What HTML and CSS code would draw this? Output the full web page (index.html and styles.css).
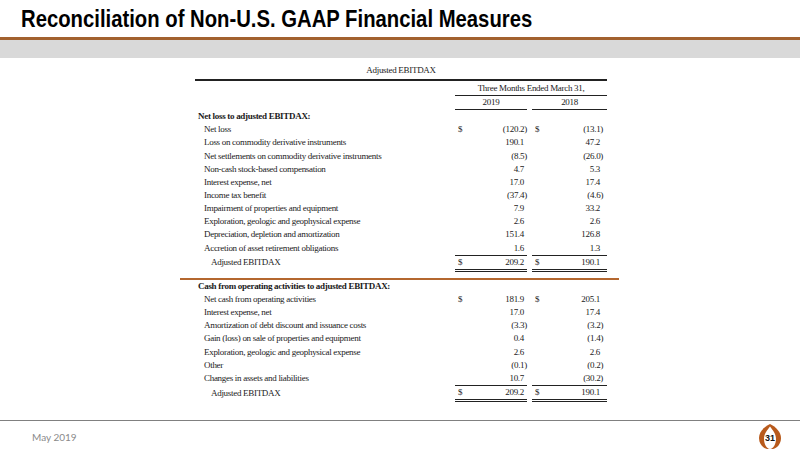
FILE: index.html
```html
<!DOCTYPE html>
<html lang="en">
<head>
  <meta charset="UTF-8">
  <meta name="viewport" content="width=device-width, initial-scale=1.0">
  <title>Reconciliation of Non-U.S. GAAP Financial Measures</title>
  <link rel="stylesheet" href="styles.css">
</head>
<body>
  <header class="slide-header">
    <h1>Reconciliation of Non-U.S. GAAP Financial Measures</h1>
  </header>
  <div class="band"></div>

  <main class="slide-body">
    <table class="recon">
      <colgroup>
        <col class="c-label">
        <col class="c-cur1">
        <col class="c-num1">
        <col class="c-gap">
        <col class="c-cur2">
        <col class="c-num2">
      </colgroup>
      <tr class="caption">
        <td colspan="6">Adjusted EBITDAX</td>
      </tr>
      <tr class="period">
        <td></td>
        <td colspan="5" class="rule">Three Months Ended March 31,</td>
      </tr>
      <tr class="years">
        <td></td>
        <td colspan="2" class="rule">2019</td>
        <td></td>
        <td colspan="2" class="rule">2018</td>
      </tr>

      <tr class="section"><td colspan="6">Net loss to adjusted EBITDAX:</td></tr>
      <tr><td class="item">Net loss</td><td class="cur">$</td><td class="num">(120.2)</td><td></td><td class="cur">$</td><td class="num">(13.1)</td></tr>
      <tr><td class="item">Loss on commodity derivative instruments</td><td></td><td class="num p">190.1</td><td></td><td></td><td class="num p">47.2</td></tr>
      <tr><td class="item">Net settlements on commodity derivative instruments</td><td></td><td class="num">(8.5)</td><td></td><td></td><td class="num">(26.0)</td></tr>
      <tr><td class="item">Non-cash stock-based compensation</td><td></td><td class="num p">4.7</td><td></td><td></td><td class="num p">5.3</td></tr>
      <tr><td class="item">Interest expense, net</td><td></td><td class="num p">17.0</td><td></td><td></td><td class="num p">17.4</td></tr>
      <tr><td class="item">Income tax benefit</td><td></td><td class="num">(37.4)</td><td></td><td></td><td class="num">(4.6)</td></tr>
      <tr><td class="item">Impairment of properties and equipment</td><td></td><td class="num p">7.9</td><td></td><td></td><td class="num p">33.2</td></tr>
      <tr><td class="item">Exploration, geologic and geophysical expense</td><td></td><td class="num p">2.6</td><td></td><td></td><td class="num p">2.6</td></tr>
      <tr><td class="item">Depreciation, depletion and amortization</td><td></td><td class="num p">151.4</td><td></td><td></td><td class="num p">126.8</td></tr>
      <tr class="last"><td class="item">Accretion of asset retirement obligations</td><td class="rule"></td><td class="num p rule">1.6</td><td></td><td class="rule"></td><td class="num p rule">1.3</td></tr>
      <tr class="total"><td class="item">Adjusted EBITDAX</td><td class="cur dbl">$</td><td class="num p dbl">209.2</td><td></td><td class="cur dbl">$</td><td class="num p dbl">190.1</td></tr>

      <tr class="sep"><td colspan="6"><div class="sep-line"></div></td></tr>

      <tr class="section"><td colspan="6">Cash from operating activities to adjusted EBITDAX:</td></tr>
      <tr><td class="item">Net cash from operating activities</td><td class="cur">$</td><td class="num p">181.9</td><td></td><td class="cur">$</td><td class="num p">205.1</td></tr>
      <tr><td class="item">Interest expense, net</td><td></td><td class="num p">17.0</td><td></td><td></td><td class="num p">17.4</td></tr>
      <tr><td class="item">Amortization of debt discount and issuance costs</td><td></td><td class="num">(3.3)</td><td></td><td></td><td class="num">(3.2)</td></tr>
      <tr><td class="item">Gain (loss) on sale of properties and equipment</td><td></td><td class="num p">0.4</td><td></td><td></td><td class="num">(1.4)</td></tr>
      <tr><td class="item">Exploration, geologic and geophysical expense</td><td></td><td class="num p">2.6</td><td></td><td></td><td class="num p">2.6</td></tr>
      <tr><td class="item">Other</td><td></td><td class="num">(0.1)</td><td></td><td></td><td class="num">(0.2)</td></tr>
      <tr class="last"><td class="item">Changes in assets and liabilities</td><td class="rule"></td><td class="num p rule">10.7</td><td></td><td class="rule"></td><td class="num rule">(30.2)</td></tr>
      <tr class="total"><td class="item">Adjusted EBITDAX</td><td class="cur dbl">$</td><td class="num p dbl">209.2</td><td></td><td class="cur dbl">$</td><td class="num p dbl">190.1</td></tr>
    </table>
  </main>

  <footer class="slide-footer">
    <span class="date">May 2019</span>
    <span class="page-badge">
      <svg width="22" height="25" viewBox="0 0 22 25">
        <path d="M11 0 C5 3 0 8 0 14 C0 20 4 24 8 25 L14 25 C18 24 22 20 22 14 C22 8 17 3 11 0 Z" fill="#b85a1c"/>
        <path d="M11 2.5 C8.5 6 5 9.5 5 15 C5 20 7.5 24.5 11 25 C14.5 24.5 17 20 17 15 C17 9.5 13.5 6 11 2.5 Z" fill="#ffffff"/>
      </svg>
      <span class="page-num">31</span>
    </span>
  </footer>
</body>
</html>
```

FILE: styles.css
```css
html, body {
  margin: 0;
  padding: 0;
}

body {
  width: 800px;
  height: 450px;
  overflow: hidden;
  display: flex;
  flex-direction: column;
  background-color: #ffffff;
  color: #000;
}

.slide-header {
  height: 40px;
  box-sizing: border-box;
  padding: 5px 0 0 21px;
  border-bottom: 3px solid #a2612e;
}

.slide-header h1 {
  margin: 0;
  font-family: "Liberation Sans Narrow", "Arial Narrow", "Liberation Sans", sans-serif;
  font-weight: bold;
  font-size: 24px;
  line-height: 28px;
  white-space: nowrap;
  transform: scaleX(0.845); /* narrow face is not installed */
  transform-origin: left center;
}

.band {
  height: 18px;
  background-color: #d9d9d9; /* grey strip under the title */
}

.slide-body {
  flex: 1;
  padding: 5px 0 0 195px;
}

/* reconciliation table */
.recon {
  border-collapse: collapse;
  table-layout: fixed;
  width: 412px;
  font-family: "Liberation Serif", "Times New Roman", serif;
  font-size: 9px;
  letter-spacing: -0.3px;
  color: #1a1a1a;
}

.c-label { width: 260px; }
.c-cur1 { width: 15px; }
.c-num1 { width: 57px; }
.c-gap { width: 5px; }
.c-cur2 { width: 13px; }
.c-num2 { width: 62px; }

.recon td {
  padding: 0;
  height: 13.15px;
  line-height: 13px;
  white-space: nowrap;
}

.recon .caption td {
  text-align: center;
  height: 15px;
  vertical-align: top;
  padding-top: 1px;
  border-bottom: 2px solid #222;
}

.recon .period td,
.recon .years td {
  text-align: center;
}

.recon .period td {
  height: 13px;
  padding-top: 1px;
}

.recon td.rule {
  border-bottom: 1px solid #222;
}

.recon td.dbl {
  border-bottom: 3px double #222;
}

.recon .section td {
  font-weight: bold;
  padding-left: 3px;
}

.recon .item {
  padding-left: 9px;
}

.recon .total .item {
  padding-left: 16px;
}

.recon .cur {
  padding-left: 3px;
}

.recon .num {
  text-align: right;
}

.recon .num.p {
  padding-right: 3px;
}

.recon td.num:last-child {
  padding-right: 4px;
}

.recon td.num.p:last-child {
  padding-right: 7px;
}

.recon .sep td {
  height: 8px;
  vertical-align: bottom;
}

/* orange rule between the two blocks runs a bit past the table */
.sep-line {
  height: 2px;
  margin: 0 -12px 0 -15px;
  background-color: #b4672f;
}

.slide-footer {
  height: 30px;
  box-sizing: border-box;
  border-top: 1px solid #808080;
  display: flex;
  align-items: center;
  justify-content: space-between;
  padding: 2px 19px 0 32px;
}

.date {
  font-family: Lato, "Open Sans", sans-serif;
  font-size: 10px;
  color: #8a8a8a;
}

.page-badge {
  position: relative;
  width: 22px;
  height: 25px;
  display: flex;
}

.page-num {
  position: absolute;
  left: 0;
  right: 0;
  top: 9px;
  text-align: center;
  font-family: "Liberation Sans Narrow", "Liberation Sans", sans-serif;
  font-weight: bold;
  font-size: 9px;
  color: #111;
}
```
